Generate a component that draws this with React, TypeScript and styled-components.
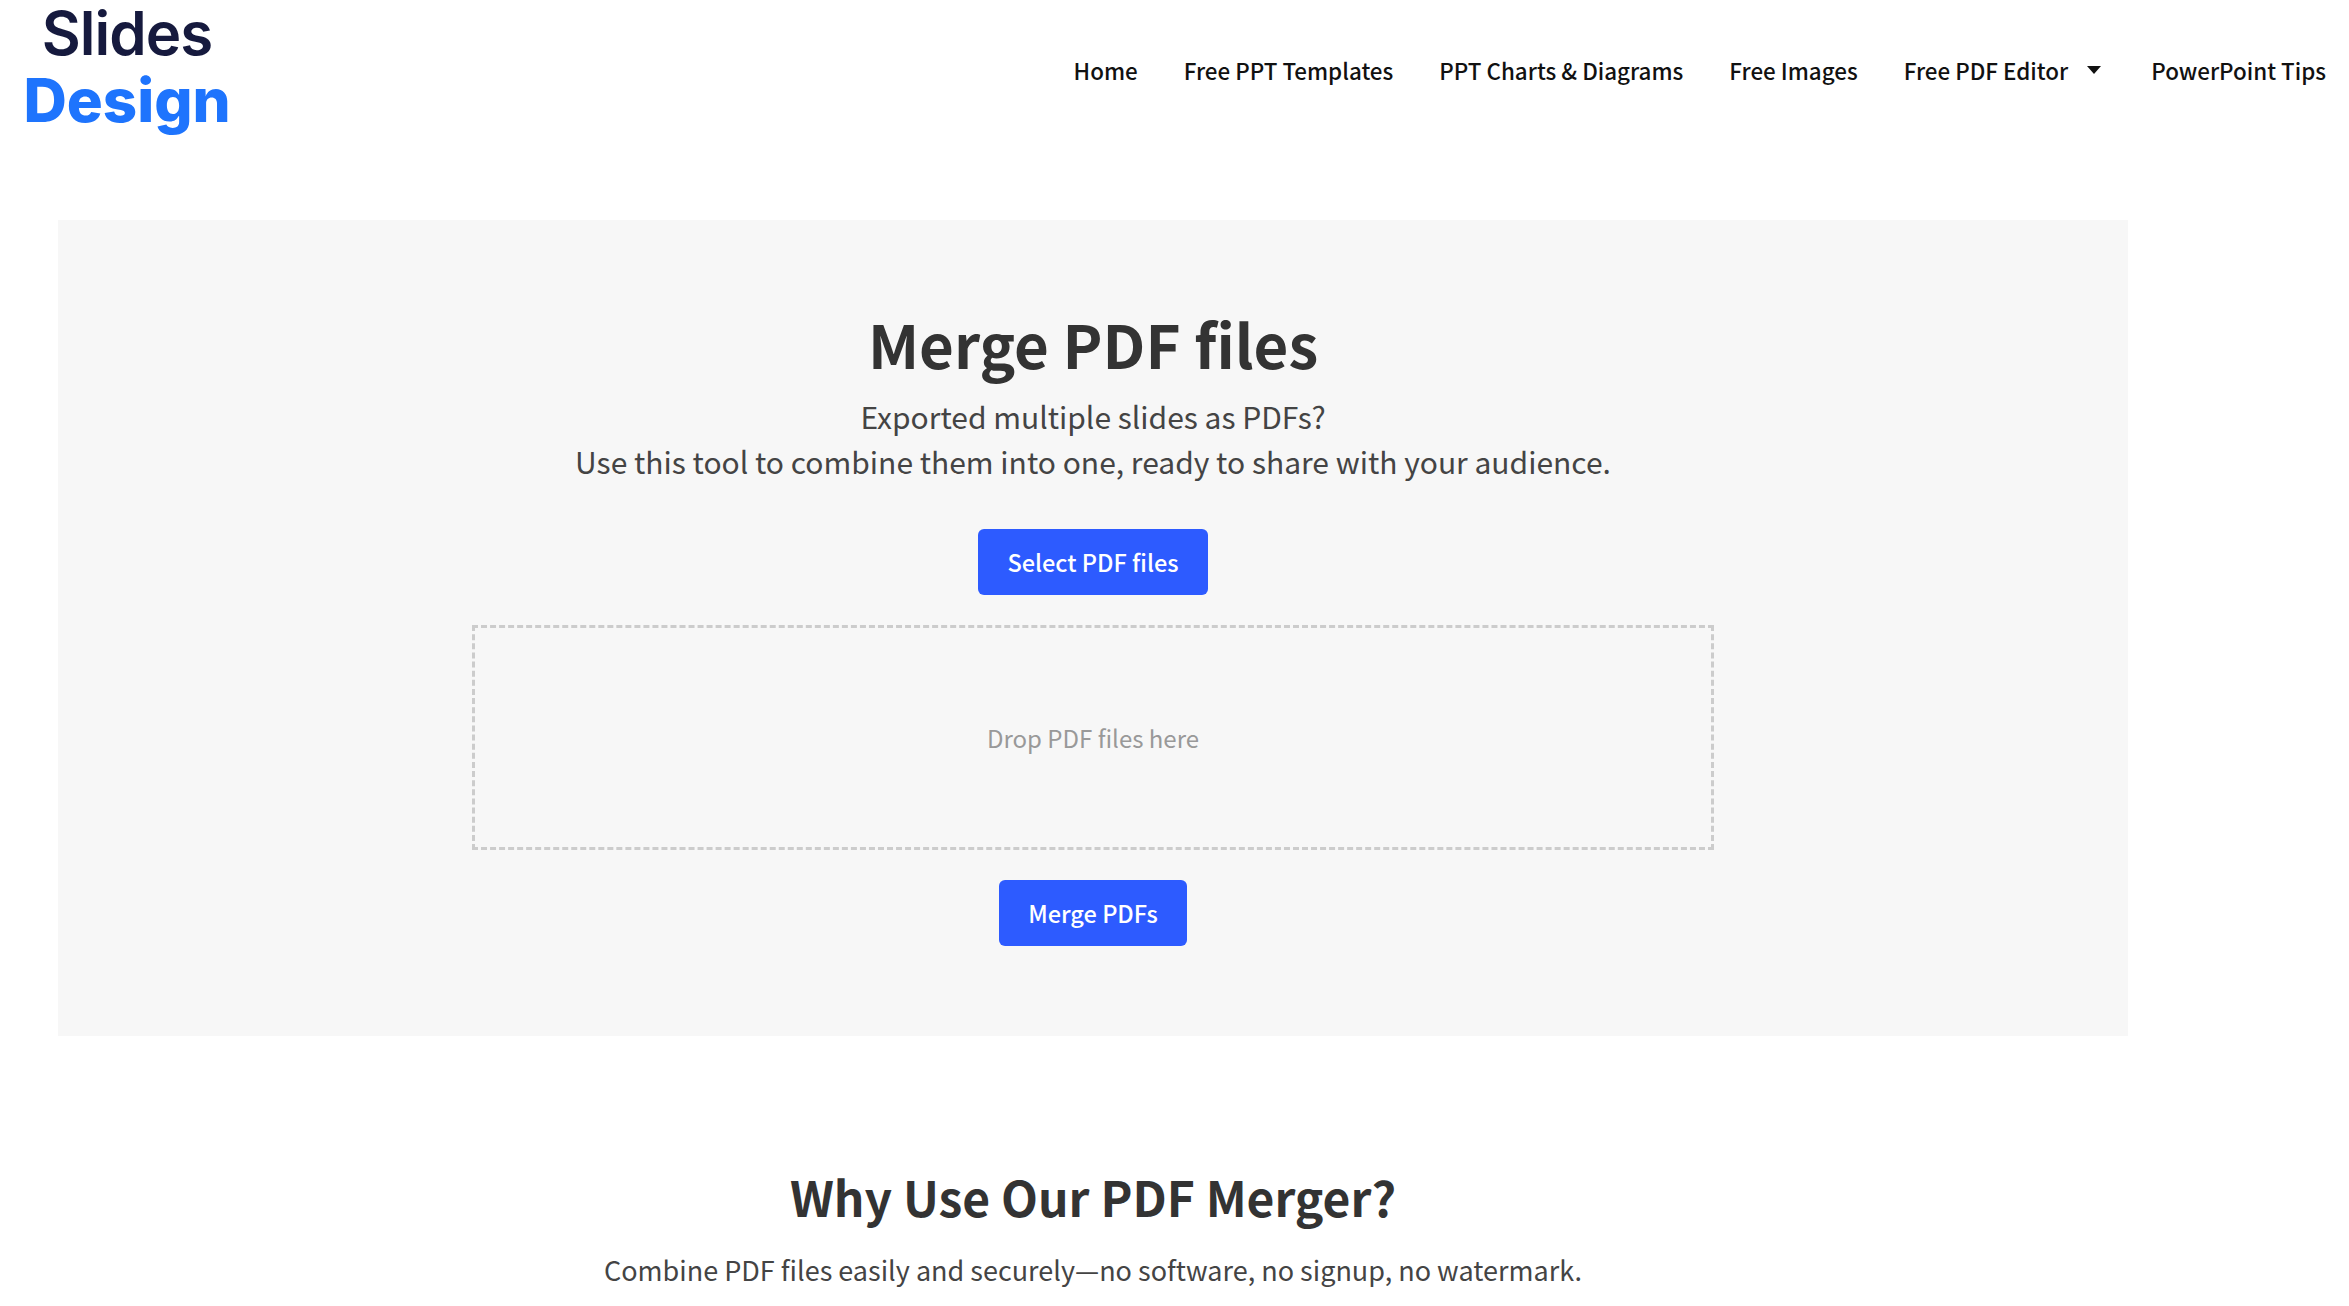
import styled, { createGlobalStyle } from "styled-components";

const GlobalStyle = createGlobalStyle`
  html, body {
    margin: 0;
    padding: 0;
    background: #fff;
  }
  body {
    font-family: "Noto Sans CJK SC", "Noto Sans", sans-serif;
    color: #444;
  }
`;

const Page = styled.div`
  width: 2349px;
  height: 1306px;
`;

const Header = styled.header`
  display: flex;
  align-items: flex-start;
  justify-content: space-between;
  height: 220px;
`;

const Logo = styled.div`
  display: flex;
  flex-direction: column;
  align-items: center;
  width: 206px;
  margin-left: 24px;
  font-family: Inter, sans-serif;
  font-size: 60px;
  line-height: 67px;
`;

const LogoLine = styled.span<{ $color: string; $weight: number; $spacing: number }>`
  color: ${(p) => p.$color};
  font-weight: ${(p) => p.$weight};
  letter-spacing: ${(p) => p.$spacing}px;
`;

const Nav = styled.nav`
  display: flex;
  align-items: center;
  height: 140px;
`;

const NavItem = styled.a`
  display: flex;
  align-items: center;
  padding: 0 23px;
  color: #111;
  font-size: 22.4px;
  font-weight: 500;
  white-space: nowrap;
`;

const Caret = styled.span`
  width: 0;
  height: 0;
  margin: 0 4px 0 19px;
  border-top: 8px solid #111;
  border-left: 7.5px solid transparent;
  border-right: 7.5px solid transparent;
`;

const Panel = styled.section`
  display: flex;
  flex-direction: column;
  align-items: center;
  box-sizing: border-box;
  width: 2070px;
  height: 816px;
  margin-left: 58px;
  padding-top: 80px;
  background: #f7f7f7;
`;

const Title = styled.h1`
  margin: 0 0 8px;
  color: #333;
  font-size: 60px;
  font-weight: 700;
  line-height: 86px;
`;

const Lead = styled.p`
  margin: 0 0 45px;
  font-size: 30px;
  line-height: 45px;
  text-align: center;
`;

const Button = styled.button`
  box-sizing: border-box;
  height: 66px;
  padding: 0 29.5px;
  border: 0;
  border-radius: 6px;
  background: #2d5bff;
  color: #fff;
  font-family: inherit;
  font-size: 23.5px;
  font-weight: 500;
`;

const DropZone = styled.div`
  display: flex;
  align-items: center;
  justify-content: center;
  box-sizing: border-box;
  width: 1242px;
  height: 225px;
  margin: 30px 0;
  border: 3px dashed #ccc;
  color: #999;
  font-size: 24px;
`;

const Why = styled.section`
  display: flex;
  flex-direction: column;
  align-items: center;
  width: 2070px;
  margin: 124px 0 0 58px;
`;

const Subtitle = styled.h2`
  margin: 0 0 15px;
  color: #333;
  font-size: 48px;
  font-weight: 700;
  line-height: 72px;
`;

const WhyText = styled.p`
  margin: 0;
  font-size: 27px;
  line-height: 45px;
`;

const links = ["Free PPT Templates", "PPT Charts & Diagrams", "Free Images"];

export default function App() {
  return (
    <Page>
      <GlobalStyle />
      <Header>
        <Logo>
          <LogoLine $color="#161a3e" $weight={600} $spacing={-1}>Slides</LogoLine>
          <LogoLine $color="#1e74fd" $weight={800} $spacing={0}>Design</LogoLine>
        </Logo>
        <Nav>
          <NavItem>Home</NavItem>
          {links.map((l) => (
            <NavItem key={l}>{l}</NavItem>
          ))}
          <NavItem>
            Free PDF Editor
            <Caret />
          </NavItem>
          <NavItem>PowerPoint Tips</NavItem>
        </Nav>
      </Header>
      <Panel>
        <Title>Merge PDF files</Title>
        <Lead>
          Exported multiple slides as PDFs?
          <br />
          Use this tool to combine them into one, ready to share with your audience.
        </Lead>
        <Button>Select PDF files</Button>
        <DropZone>Drop PDF files here</DropZone>
        <Button>Merge PDFs</Button>
      </Panel>
      <Why>
        <Subtitle>Why Use Our PDF Merger?</Subtitle>
        <WhyText>Combine PDF files easily and securely—no software, no signup, no watermark.</WhyText>
      </Why>
    </Page>
  );
}
